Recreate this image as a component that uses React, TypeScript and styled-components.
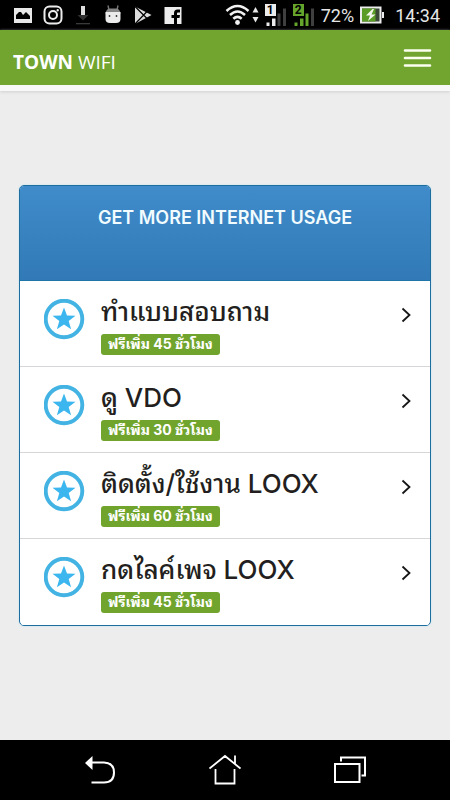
import React from 'react';
import styled, { createGlobalStyle } from 'styled-components';

const GlobalStyle = createGlobalStyle`
  * { box-sizing: border-box; }
  body { margin: 0; background: #ededed; font-family: Inter, "Noto Sans Thai Looped", Loma, Waree, Garuda, Norasi, "Noto Sans", sans-serif; }
  button { font: inherit; color: inherit; border: 0; padding: 0; background: none; cursor: pointer; }
  svg { display: block; flex: none; }
`;

const Page = styled.div`
  min-height: 100vh;
  display: flex;
  flex-direction: column;
`;

const StatusBar = styled.div`
  height: 30px;
  padding: 0 10px 0 8px;
  display: flex;
  align-items: center;
  justify-content: space-between;
  background: #000;
  color: #e6e6e6;
  font-family: Roboto, sans-serif;
  font-size: 18px;
`;

const Notifications = styled.div`
  display: grid;
  grid-template-columns: repeat(6, 30px);
  justify-items: center;
`;

const SystemStatus = styled.div`
  display: flex;
  align-items: center;
  gap: 6px;
`;

const Clock = styled.time`
  margin-left: 4px;
  line-height: 28px;
  padding-top: 2px;
`;

const StatusText = styled.span`
  line-height: 28px;
  padding-top: 2px;
`;

const TopBar = styled.header`
  height: 61px;
  padding: 0 18px 0 13px;
  display: flex;
  align-items: center;
  justify-content: space-between;
  background: #72a52f;
  border-bottom: 6px solid #f8f8f8;
  box-shadow: 0 1px 3px #d0d0d0;
  color: #fff;
`;

const Brand = styled.a`
  padding-top: 8px;
  font-family: "Open Sans", "Noto Sans", sans-serif;
  font-size: 19px;
  line-height: 24px;
  font-weight: 400;
  color: #fff;
  text-decoration: none;
`;

const BrandStrong = styled.strong`
  font-weight: 700;
`;

const MenuButton = styled.button`
  display: block;
`;

const Content = styled.main`
  flex: 1;
  padding: 94px 19px;
`;

const Card = styled.section`
  border: 1px solid #1d6d9f;
  border-radius: 5px;
  overflow: hidden;
  background: #fff;
  box-shadow: 0 0 2px #b9e2f2;
`;

const CardHeader = styled.div`
  height: 95px;
  padding-top: 20px;
  background: linear-gradient(#408bca, #317ab7);
  border-bottom: 1px solid #1d75a8;
  text-align: center;
`;

const CardTitle = styled.h1`
  margin: 0;
  font-size: 18px;
  line-height: 24px;
  font-weight: 600;
  color: #f2fcff;
`;

const List = styled.ul`
  margin: 0;
  padding: 0;
  list-style: none;
`;

const Item = styled.li`
  border-bottom: 1px solid #d6d6d8;

  &:last-child { border-bottom-color: #fff; }
`;

const Row = styled.button`
  width: 100%;
  height: 85px;
  padding: 1px 18px 0 24px;
  display: flex;
  align-items: flex-start;
  text-align: left;
`;

const StarBadge = styled.span`
  padding-top: 17px;
  margin-right: 16px;
`;

const RowBody = styled.span`
  flex: 1;
  min-width: 0;
  padding-top: 12px;
  display: flex;
  flex-direction: column;
  align-items: flex-start;
`;

const RowTitle = styled.span`
  height: 40px;
  font-size: 26px;
  line-height: 36px;
  font-weight: 500;
  white-space: nowrap;
  color: #231f20;
`;

const Reward = styled.span`
  height: 21px;
  padding: 0 7px;
  border-radius: 3px;
  background: #70a42d;
  color: #fff;
  font-size: 14px;
  line-height: 19px;
  font-weight: 700;
  white-space: nowrap;
`;

const Arrow = styled.span`
  padding-top: 25px;
`;

const NavBar = styled.nav`
  height: 60px;
  display: grid;
  grid-template-columns: 1fr 1fr 1fr;
  background: #000;
  padding: 0 38px;
`;

const NavButton = styled.button`
  display: flex;
  align-items: center;
  justify-content: center;
`;

const StarIcon = () => (
  <svg width="41" height="41" viewBox="0 0 41 41" aria-hidden="true">
    <circle cx="20" cy="20" r="18.3" fill="#fff" stroke="#42b3e3" strokeWidth="3.9" />
    <path d="M20 8.500 L23 16.600 L31.500 16.800 L24.700 22 L27.100 30.300 L20 25.500 L12.900 30.300 L15.300 22 L8.500 16.800 L17 16.600 Z" fill="#3cb6ee" />
  </svg>
);

const ChevronIcon = () => (
  <svg width="12" height="16" viewBox="0 0 12 16" fill="none" stroke="#161616" strokeWidth="1.8" aria-hidden="true">
    <path d="M2.500 1.500 L9.500 8 L2.500 14.500" />
  </svg>
);

const MenuIcon = () => (
  <svg width="29" height="20" viewBox="0 0 29 20" stroke="#fcfff0" strokeWidth="2.6" strokeLinecap="round" aria-hidden="true">
    <path d="M2 2.5 H27 M2 10 H27 M2 17.5 H27" />
  </svg>
);

const PictureIcon = () => (
  <svg width="20" height="20" viewBox="0 0 20 20" aria-hidden="true">
    <path d="M1 3 H19 V18 H1 Z" fill="#e8e8e8" />
    <path d="M3 13 L3 10 L6 7 H8 L10 10 L13 7 L17 11 V14 H3 Z" fill="#000" />
  </svg>
);

const CameraIcon = () => (
  <svg width="20" height="20" viewBox="0 0 20 20" fill="none" stroke="#ececec" strokeWidth="2" aria-hidden="true">
    <rect x="1.5" y="1.5" width="17" height="17" rx="5" />
    <circle cx="10" cy="10" r="4" />
    <circle cx="14.7" cy="5.3" r="0.6" strokeWidth="1.2" />
  </svg>
);

const DownloadIcon = () => (
  <svg width="20" height="20" viewBox="0 0 20 20" aria-hidden="true">
    <path d="M8 1 H12 V10 H8 Z" fill="#dedede" />
    <path d="M4.500 10 H15.500 L10 15.500 Z" fill="#303030" />
    <path d="M3 18 H17 V19.300 H3 Z" fill="#3a3a3a" />
  </svg>
);

const RobotIcon = () => (
  <svg width="20" height="20" viewBox="0 0 20 20" aria-hidden="true">
    <path d="M6 5 L5 0.500 M14 5 L15 0.500" stroke="#777" strokeWidth="1.4" />
    <path d="M2.500 9 Q3 3.500 7 3.500 H13 Q17 3.500 17.500 9 Z" fill="#858585" />
    <path d="M2.500 7 H17.500 V14 Q17.500 18 13 18 H7 Q2.500 18 2.500 14 Z" fill="#ececec" />
    <circle cx="6.500" cy="11" r="0.9" fill="#333" />
    <circle cx="13.500" cy="11" r="0.9" fill="#333" />
  </svg>
);

const PlayStoreIcon = () => (
  <svg width="20" height="20" viewBox="0 0 20 20" aria-hidden="true">
    <path d="M2 1.500 L18.500 10 L2 19 Z" fill="#dcdcdc" />
    <path d="M2 1.500 L14.500 14 M2 19 L14.500 6" stroke="#000" strokeWidth="1.2" />
  </svg>
);

const FacebookIcon = () => (
  <svg width="20" height="20" viewBox="0 0 20 20" aria-hidden="true">
    <path d="M1.500 2 H18.500 V19 H1.500 Z" fill="#ececec" />
    <path d="M11 19 V13 H8.500 V10 H11 V8 Q11 4.500 14.500 4.500 H17 V7.500 H15 Q14 7.500 14 8.500 V10 H17 L16.500 13 H14 V19 Z" fill="#000" />
  </svg>
);

const WifiIcon = () => (
  <svg width="34" height="22" viewBox="0 0 34 22" aria-hidden="true">
    <g fill="none" stroke="#f2f2f2" strokeWidth="2.500">
      <path d="M1.500 7 Q12.500 -3 23.500 7" />
      <path d="M5 11 Q12.500 4 20 11" />
      <path d="M8.300 14.800 Q12.500 11 16.700 14.800" />
    </g>
    <circle cx="12.500" cy="18.500" r="2.400" fill="#f2f2f2" />
    <path d="M30.500 3 L33.500 8.500 H27.500 Z M30.500 18.500 L33.500 13 H27.500 Z" fill="#e8e8e8" />
  </svg>
);

const Sim = styled.span`
  position: relative;
  display: block;
  width: 22px;
`;

const SimNumber = styled.span<{ $tint: string }>`
  position: absolute;
  top: 0;
  left: 0;
  width: 11px;
  height: 12px;
  background: ${(p) => p.$tint};
  color: #000;
  font-size: 12px;
  line-height: 12px;
  font-weight: 700;
  text-align: center;
`;

const SimSignal = ({ slot, tint, bars }: { slot: number; tint: string; bars: number }) => (
  <Sim>
    <SimNumber $tint={tint}>{slot}</SimNumber>
    <svg width="22" height="23" viewBox="0 0 22 23" aria-hidden="true">
      <path d="M1.500 18.500 H4.500 V22 H1.500 Z" fill={tint} />
      <path d="M7 14.500 H10.500 V22 H7 Z" fill={tint} />
      <path d="M12.500 9.500 H15.500 V22 H12.500 Z" fill={bars > 2 ? tint : '#3f3f3f'} />
      <path d="M18 4.500 H21 V22 H18 Z" fill="#3f3f3f" />
    </svg>
  </Sim>
);

const BatteryIcon = () => (
  <svg width="25" height="18" viewBox="0 0 25 18" aria-hidden="true">
    <path d="M1 1.500 H20.500 V16.500 H1 Z" fill="#3b4838" stroke="#ececec" strokeWidth="2" />
    <path d="M2 2.500 H15.500 V15.500 H2 Z" fill="#5a9c25" />
    <path d="M22 6 H24 V12 H22 Z" fill="#ececec" />
    <path d="M12.500 3 L6 9.500 H10 L8 15 L15.500 8.500 H11.500 L14 3 Z" fill="#f4f7ec" />
  </svg>
);

const BackIcon = () => (
  <svg width="32" height="32" viewBox="0 0 32 32" aria-hidden="true">
    <path d="M1 9 L8.500 2 V16 Z" fill="#fff" />
    <path d="M8 8.500 H20 Q30 9 30 18.500 Q30 28.500 20 28.500 H7.500" fill="none" stroke="#fff" strokeWidth="2" />
  </svg>
);

const HomeIcon = () => (
  <svg width="32" height="32" viewBox="0 0 32 32" fill="none" stroke="#fff" strokeWidth="1.8" aria-hidden="true">
    <path d="M0.500 14.500 L16 2 L31.500 14.500 M26 9.500 V1.500 M6.500 15 V29.500 H25.500 V15" />
  </svg>
);

const RecentIcon = () => (
  <svg width="34" height="32" viewBox="0 0 34 32" fill="none" stroke="#fff" strokeWidth="2" aria-hidden="true">
    <path d="M2 10 H26.500 V28 H2 Z M8 7.500 V3.500 H32 V21.500 H28.500" />
  </svg>
);

const offers = [
  { title: 'ทำแบบสอบถาม', reward: 'ฟรีเพิ่ม 45 ชั่วโมง' },
  { title: 'ดู VDO', reward: 'ฟรีเพิ่ม 30 ชั่วโมง' },
  { title: 'ติดตั้ง/ใช้งาน LOOX', reward: 'ฟรีเพิ่ม 60 ชั่วโมง' },
  { title: 'กดไลค์เพจ LOOX', reward: 'ฟรีเพิ่ม 45 ชั่วโมง' },
];

export default function App() {
  return (
    <Page lang="th">
      <GlobalStyle />
      <StatusBar>
        <Notifications>
          <PictureIcon />
          <CameraIcon />
          <DownloadIcon />
          <RobotIcon />
          <PlayStoreIcon />
          <FacebookIcon />
        </Notifications>
        <SystemStatus>
          <WifiIcon />
          <SimSignal slot={1} tint="#ececec" bars={2} />
          <SimSignal slot={2} tint="#65a52b" bars={3} />
          <StatusText>72%</StatusText>
          <BatteryIcon />
          <Clock>14:34</Clock>
        </SystemStatus>
      </StatusBar>
      <TopBar>
        <Brand href="#"><BrandStrong>TOWN</BrandStrong> WIFI</Brand>
        <MenuButton type="button" aria-label="Menu"><MenuIcon /></MenuButton>
      </TopBar>
      <Content>
        <Card>
          <CardHeader>
            <CardTitle>GET MORE INTERNET USAGE</CardTitle>
          </CardHeader>
          <List>
            {offers.map((offer) => (
              <Item key={offer.title}>
                <Row type="button">
                  <StarBadge><StarIcon /></StarBadge>
                  <RowBody>
                    <RowTitle>{offer.title}</RowTitle>
                    <Reward>{offer.reward}</Reward>
                  </RowBody>
                  <Arrow><ChevronIcon /></Arrow>
                </Row>
              </Item>
            ))}
          </List>
        </Card>
      </Content>
      <NavBar>
        <NavButton type="button" aria-label="Back"><BackIcon /></NavButton>
        <NavButton type="button" aria-label="Home"><HomeIcon /></NavButton>
        <NavButton type="button" aria-label="Recent apps"><RecentIcon /></NavButton>
      </NavBar>
    </Page>
  );
}
